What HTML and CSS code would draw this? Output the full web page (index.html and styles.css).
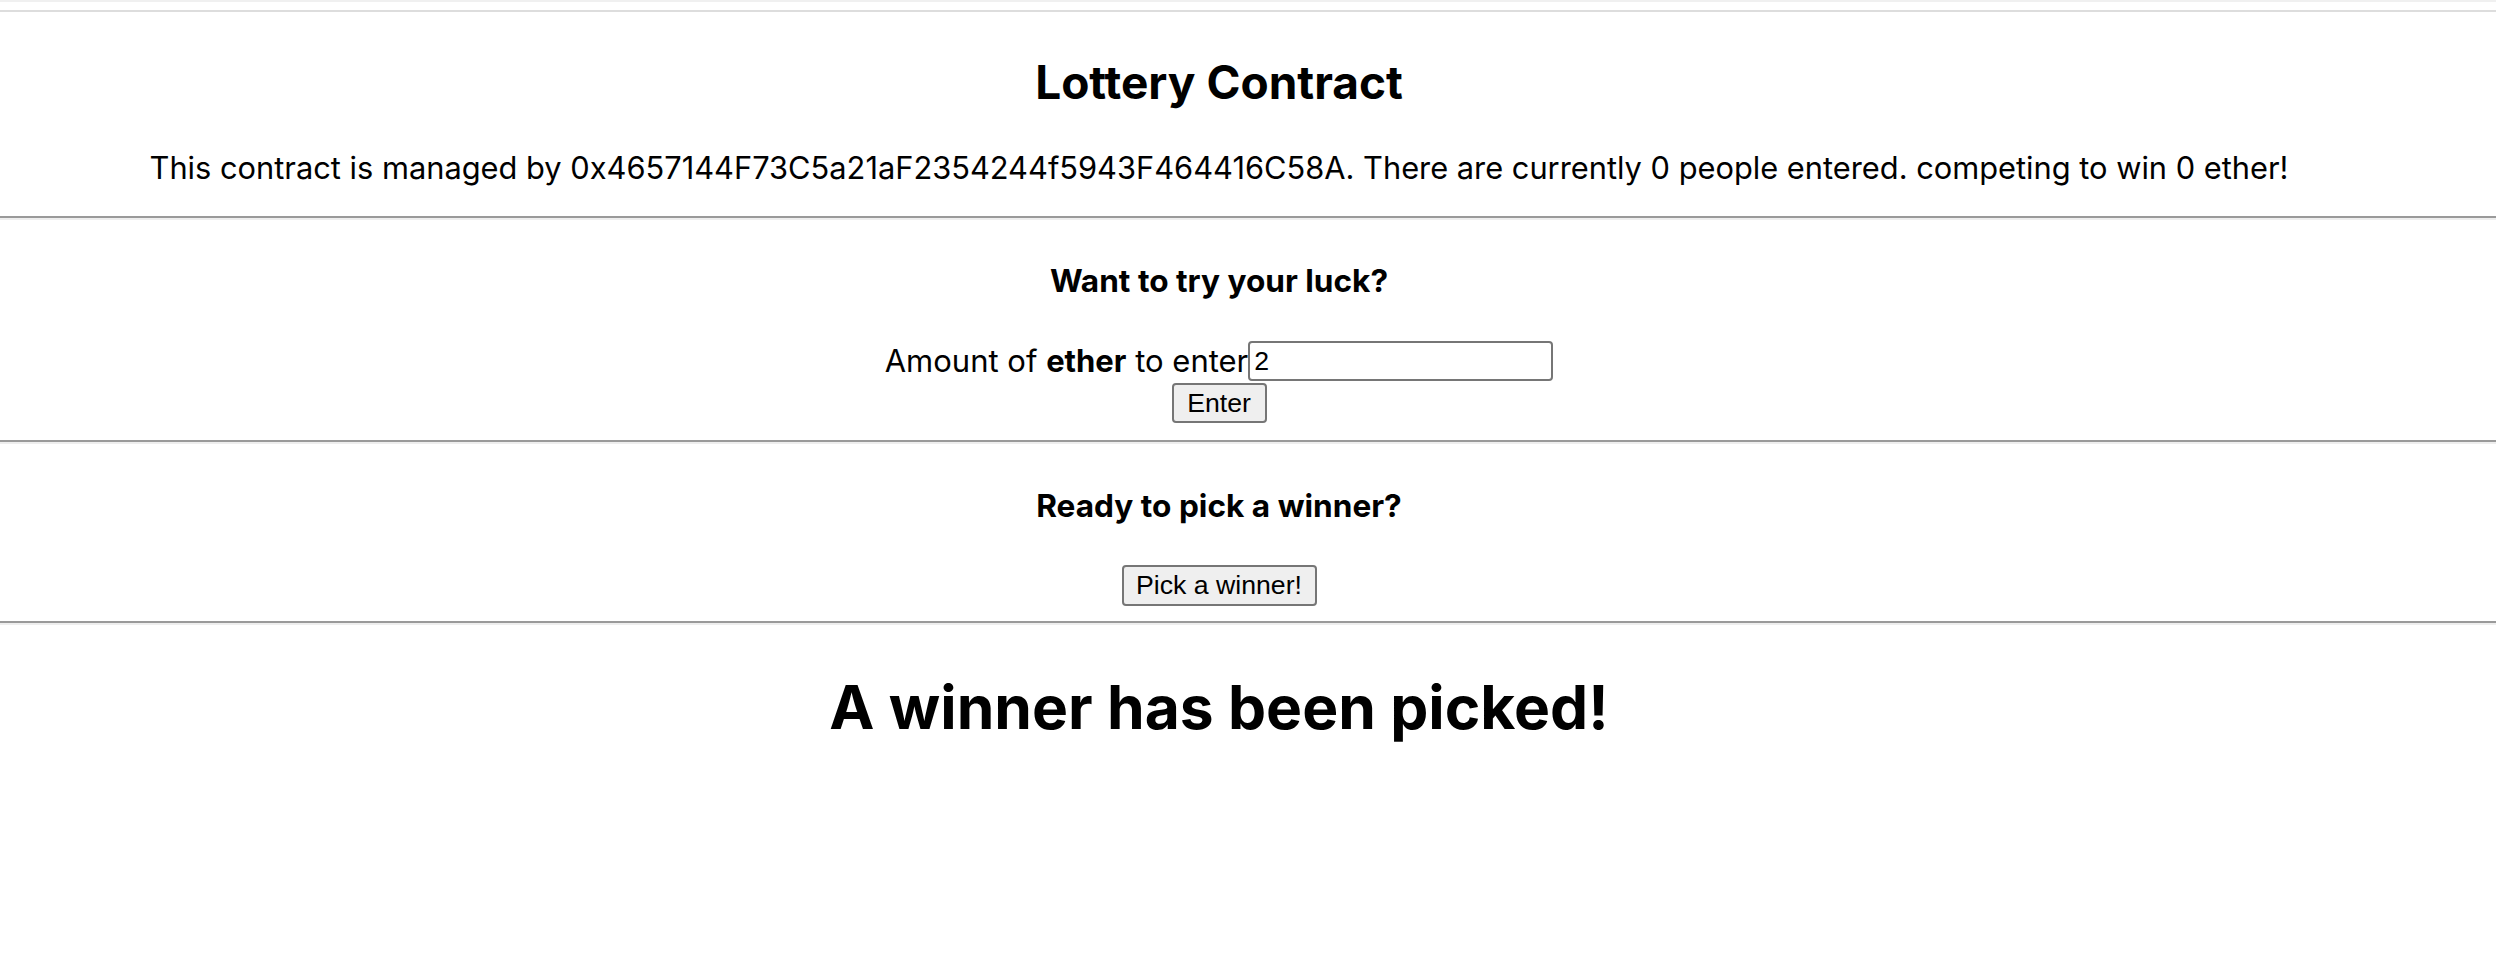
FILE: index.html
```html
<!DOCTYPE html>
<html>
<head>
<meta charset="utf-8">
<link rel="stylesheet" href="styles.css">
</head>
<body>
<div class="topbar"></div>
<main class="app">
  <h1 class="title">Lottery Contract</h1>
  <p class="info">This contract is managed by 0x4657144F73C5a21aF2354244f5943F464416C58A. There are currently 0 people entered. competing to win 0 ether!</p>
  <hr class="rule">
  <form class="section enter-form">
    <h4 class="heading">Want to try your luck?</h4>
    <div class="field">
      <label class="label">Amount of <b>ether</b> to enter</label><input class="input" type="text" value="2">
    </div>
    <button class="btn btn-enter" type="button">Enter</button>
  </form>
  <hr class="rule rule-2">
  <div class="section pick">
    <h4 class="heading heading-2">Ready to pick a winner?</h4>
    <button class="btn btn-pick" type="button">Pick a winner!</button>
  </div>
  <hr class="rule rule-3">
  <h1 class="message">A winner has been picked!</h1>
</main>
</body>
</html>
```

FILE: styles.css
```css
html, body {
  margin: 0;
  padding: 0;
  background: #ffffff;
}
body {
  font-family: Inter, "Liberation Sans", sans-serif;
  color: #000;
  position: relative;
}
.topbar {
  position: absolute;
  left: 0;
  right: 0;
  top: 0;
  border-top: 2px solid #f0f0f0;
  border-bottom: 2px solid #dddddd;
  box-sizing: content-box;
  height: 8px;
}
.app {
  text-align: center;
  display: flow-root;
  padding-right: 58px;
}
.title {
  font-size: 46px;
  font-weight: 700;
  line-height: 64px;
  margin: 50px 0 0;
}
.info {
  font-size: 30.8px;
  line-height: 40px;
  margin: 34px 0 0;
}
.rule {
  border: 0;
  border-top: 2px solid #9a9a9a;
  border-bottom: 2px solid #eeeeee;
  height: 0;
  margin: 28px -58px 0 0;
}
.section {
  display: flex;
  flex-direction: column;
  align-items: center;
}
.heading {
  font-size: 31.6px;
  font-weight: 700;
  line-height: 40px;
  margin: 41px 0 0;
}
.field {
  margin-top: 40px;
  font-size: 31px;
  line-height: 40px;
  display: flex;
  align-items: center;
}
.label {
  display: inline;
}
.input {
  font-family: "Liberation Sans", Arial, sans-serif;
  font-size: 26.67px;
  width: 305px;
  height: 40px;
  box-sizing: border-box;
  border: 2px solid #767676;
  border-radius: 4px;
  padding: 2px 4px;
  margin: 0;
}
.btn {
  font-family: "Liberation Sans", Arial, sans-serif;
  font-size: 26.67px;
  color: #000;
  background: #efefef;
  border: 2px solid #767676;
  border-radius: 4px;
  box-sizing: border-box;
  padding: 0 12px;
  margin: 0;
}
.btn-enter {
  margin-top: 2px;
  height: 40px;
  width: 95px;
}
.rule-2 {
  margin-top: 17px;
}
.heading-2 {
  margin-top: 42px;
}
.btn-pick {
  margin-top: 39px;
  height: 41px;
  width: 195px;
}
.rule-3 {
  margin-top: 15px;
}
.message {
  font-size: 60.5px;
  font-weight: 700;
  line-height: 80px;
  margin: 42px 0 0;
}
```
